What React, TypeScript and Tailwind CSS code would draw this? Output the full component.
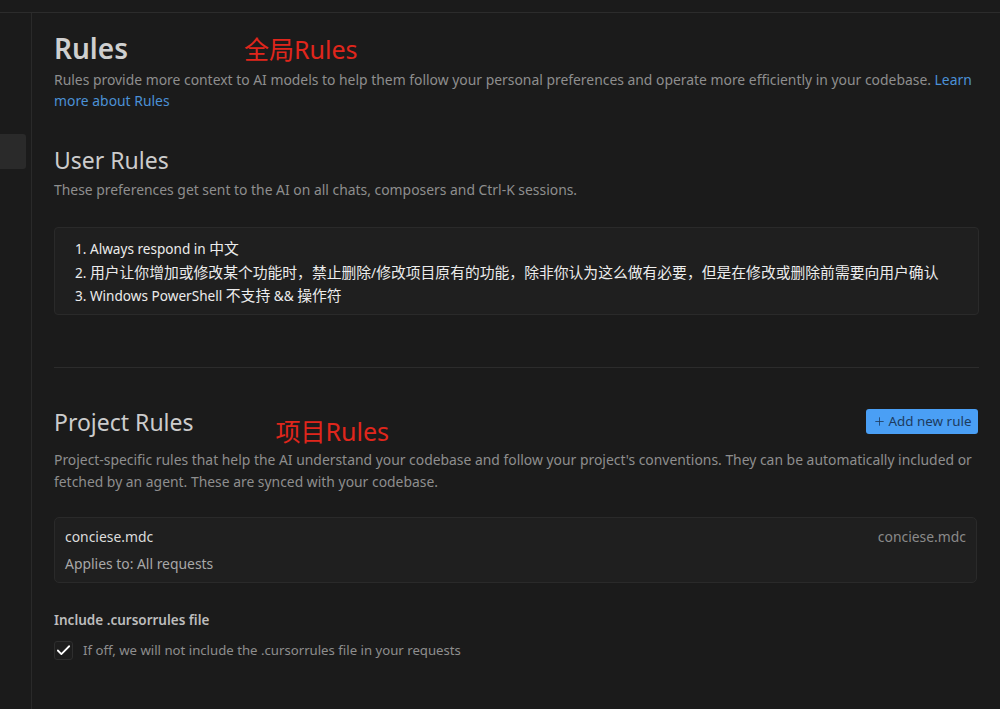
import { Check, Plus } from "lucide-react";

const FONT = "font-['Segoe_UI','Noto_Sans','Noto_Sans_CJK_SC',sans-serif]";

function Zh({ children }: { children: string }) {
  return <span className="text-[14.8px]">{children}</span>;
}

export default function App() {
  return (
    <div className={`h-[709px] w-[1000px] overflow-hidden bg-[#1b1b1b] text-[#cccccc] ${FONT}`}>
      <div className="h-[13px] border-b border-[#2c2c2c] bg-[#1b1b1b]" />
      <div className="flex h-[696px]">
        {/* sidebar */}
        <div className="w-[32px] shrink-0 border-r border-[#2a2a2a] pt-[121px]">
          <div className="h-[35px] w-[26px] rounded-r-[3px] bg-[#2a2a2a]" />
        </div>

        {/* content */}
        <div className="flex-1 pl-[22px] pr-[21px] pt-[16px]">
          <div className="flex items-baseline">
            <h1 className="text-[28px] font-semibold leading-[38px] text-[#cfcfcf]">Rules</h1>
            <span className="ml-[116px] text-[25px] leading-[38px] text-[#e0261c]">全局Rules</span>
          </div>
          <p className="mt-[1px] text-[13.9px] leading-[21px] text-[#8e8e8e]">
            Rules provide more context to AI models to help them follow your personal preferences and operate more efficiently in your codebase.{" "}
            <span className="text-[#4b91d6]">Learn</span> <span className="text-[#4b91d6]">more about Rules</span>
          </p>

          <h2 className="mt-[34px] text-[23px] leading-[30px] text-[#cccccc]">User Rules</h2>
          <p className="mt-[4px] text-[13.9px] leading-[21px] text-[#8e8e8e]">
            These preferences get sent to the AI on all chats, composers and Ctrl-K sessions.
          </p>

          <div className="mt-[27px] h-[88px] rounded-[4px] border border-[#2a2a2a] bg-[#1f1f1f] pl-[20px] pt-[9px] text-[13.6px] leading-[22.5px] text-[#ececec]">
            <div>
              1. Always respond in <Zh>中文</Zh>
            </div>
            <div>
              2. <Zh>用户让你增加或修改某个功能时，禁止删除</Zh>/<Zh>修改项目原有的功能，除非你认为这么做有必要，但是在修改或删除前需要向用户确认</Zh>
            </div>
            <div>
              3. Windows PowerShell <Zh>不支持</Zh> &amp;&amp; <Zh>操作符</Zh>
            </div>
          </div>

          <div className="mt-[52px] border-t border-[#2c2c2c]" />

          <div className="mt-[38px] flex items-end justify-between">
            <div className="flex items-baseline">
              <h2 className="text-[23px] leading-[30px] text-[#cccccc]">Project Rules</h2>
              <span className="ml-[82px] translate-y-[10px] text-[25px] leading-[30px] text-[#e0261c]">项目Rules</span>
            </div>
            <button className="mb-[3px] mr-[1px] flex h-[25px] w-[112px] items-center justify-center gap-[3px] rounded-[3px] bg-[#4a9ff5] text-[13.4px] text-[#1d3b5e]">
              <Plus className="h-[13px] w-[13px]" strokeWidth={1.5} />
              <span>Add new rule</span>
            </button>
          </div>
          <p className="mt-[12px] text-[13.9px] leading-[22px] text-[#8e8e8e]">
            Project-specific rules that help the AI understand your codebase and follow your project's conventions. They can be automatically included or fetched by an agent. These are synced with your codebase.
          </p>

          <div className="mt-[24px] mr-[2px] h-[66px] rounded-[5px] border border-[#2a2a2a] bg-[#1f1f1f] px-[10px] pt-[9px]">
            <div className="flex justify-between text-[13.9px] leading-[20px]">
              <span className="text-[#dcdcdc]">conciese.mdc</span>
              <span className="text-[#8a8a8a]">conciese.mdc</span>
            </div>
            <div className="mt-[7px] text-[13.9px] leading-[20px] text-[#a8a8a8]">Applies to: All requests</div>
          </div>

          <div className="mt-[27px] text-[13.5px] font-semibold leading-[20px] text-[#bdbdbd]">Include .cursorrules file</div>
          <div className="mt-[10px] flex items-center gap-[10px]">
            <div className="flex h-[19px] w-[19px] items-center justify-center rounded-[3px] border border-[#2e2e2e] bg-[#1d1d1d]">
              <Check className="h-[17px] w-[17px] text-white" strokeWidth={2.5} />
            </div>
            <span className="text-[13.2px] leading-[20px] text-[#8e8e8e]">If off, we will not include the .cursorrules file in your requests</span>
          </div>
        </div>
      </div>
    </div>
  );
}
